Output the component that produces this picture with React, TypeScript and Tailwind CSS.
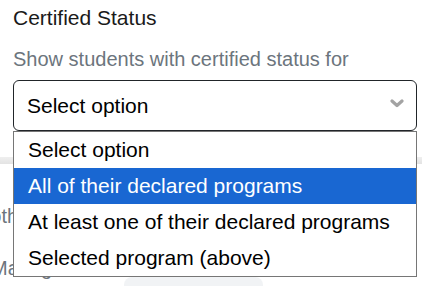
import React from 'react';

const options = [
  'Select option',
  'All of their declared programs',
  'At least one of their declared programs',
  'Selected program (above)',
];

const App: React.FC = () => {
  return (
    <div className="relative w-[422px] h-[286px] overflow-hidden bg-white font-['Liberation_Sans',Arial,sans-serif]">
      {/* Form field */}
      <div className="pl-[13px] pr-[5px] pt-[6px]">
        <h3 className="text-[21px] leading-[24px] text-[#1a1a1a]">Certified Status</h3>
        <p className="mt-[18px] text-[20px] leading-[23px] text-[#6c757d]">
          Show students with certified status for
        </p>
        <div className="mt-[9px] flex h-[51px] items-center justify-between rounded-[6px] border border-[#212529] pl-[13px] pr-[12px]">
          <span className="text-[21px] leading-[24px] text-black">Select option</span>
          <svg width="14" height="9" viewBox="0 0 14 9" className="mb-[5px]">
            <path d="M2 2 L7 6.5 L12 2" fill="none" stroke="#a3a3a3" strokeWidth="3.2" strokeLinecap="round" strokeLinejoin="round" />
          </svg>
        </div>
      </div>

      {/* Content behind the open menu */}
      <div className="mt-[26px] h-[7px] bg-gradient-to-b from-[#efefef] to-[#e3e3e3]" />
      <p className="mt-[41px] -ml-[23px] whitespace-nowrap text-[20px] leading-[23px] text-[#6c757d]">Both</p>
      <div className="mt-[29px] flex items-start">
        <span className="-ml-[9px] whitespace-nowrap text-[20px] leading-[23px] text-[#6c757d]">Managed</span>
        <div className="ml-[50px] mt-[20px] h-[20px] w-[139px] shrink-0 rounded-lg bg-[#f1f3f5]" />
      </div>

      {/* Open dropdown list */}
      <ul className="absolute left-[13px] top-[131px] w-[404px] border border-[#767676] bg-white">
        {options.map((o, i) => (
          <li
            key={o}
            className={
              i === 1
                ? 'flex h-[36px] items-center bg-[#1967d2] pl-[14px] text-[21px] leading-[24px] text-white'
                : 'flex h-[36px] items-center pl-[14px] text-[21px] leading-[24px] text-black'
            }
          >
            {o}
          </li>
        ))}
      </ul>
    </div>
  );
};

export default App;
